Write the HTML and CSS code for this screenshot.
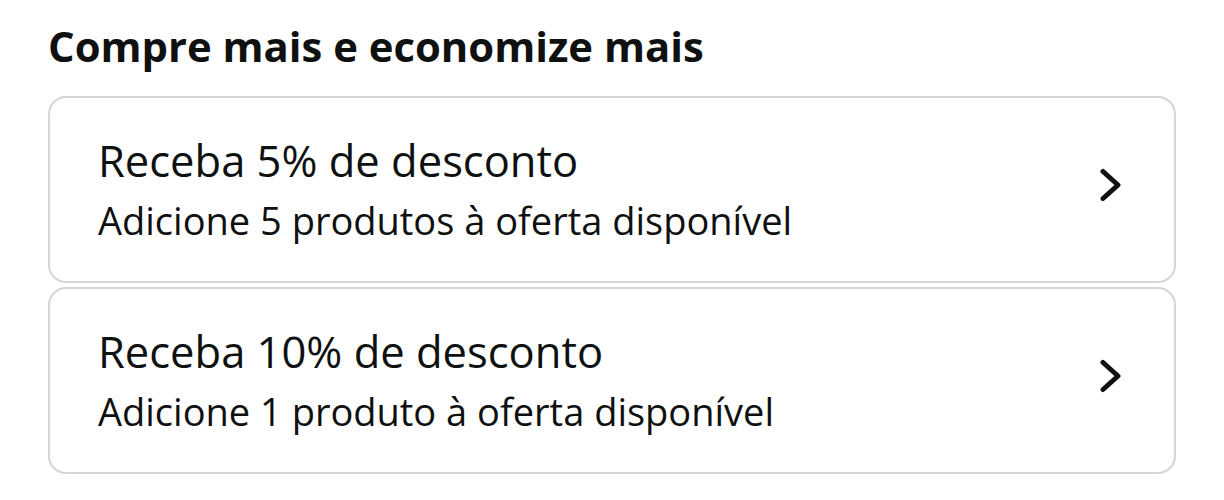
FILE: index.html
```html
<!DOCTYPE html>
<html lang="pt-BR">
  <head>
    <meta charset="UTF-8" />
    <meta name="viewport" content="width=device-width, initial-scale=1.0" />
    <title>Compre mais e economize mais</title>
    <link rel="stylesheet" href="styles.css">
  </head>

  <body>
    <div class="section">
      <h2 class="heading">Compre mais e economize mais</h2>
      <div class="offers">
        <div class="offer">
          <div class="offer-text">
            <p class="offer-title">Receba 5% de desconto</p>
            <p class="offer-sub">Adicione 5 produtos à oferta disponível</p>
          </div>
          <svg class="chevron" width="26" height="34" viewBox="0 0 26 34">
            <path d="M5 3.5 L20 17 L5 30.5" fill="none" stroke="#111" stroke-width="5" stroke-linecap="round" stroke-linejoin="round" />
          </svg>
        </div>
        <div class="offer">
          <div class="offer-text">
            <p class="offer-title">Receba 10% de desconto</p>
            <p class="offer-sub">Adicione 1 produto à oferta disponível</p>
          </div>
          <svg class="chevron" width="26" height="34" viewBox="0 0 26 34">
            <path d="M5 3.5 L20 17 L5 30.5" fill="none" stroke="#111" stroke-width="5" stroke-linecap="round" stroke-linejoin="round" />
          </svg>
        </div>
      </div>
    </div>
  </body>
</html>
```

FILE: styles.css
```css
body,
html {
  margin: 0;
  background: #fff;
  font-family: "Open Sans", "Noto Sans", Arial, sans-serif;
  color: #0f1111;
}

.section {
  padding: 20px 48px 0 48px;
}

.heading {
  margin: 0 0 24px 0;
  font-size: 41.8px;
  font-weight: 700;
  line-height: 52px;
}

.offers {
  display: flex;
  flex-direction: column;
  gap: 4px;
}

.offer {
  display: flex;
  align-items: center;
  justify-content: space-between;
  height: 183px;
  padding: 0 50px 0 48px;
  border: 2px solid #d5d5d5;
  border-radius: 18px;
}

.offer-text {
  margin-top: 4px;
}

.offer-title {
  margin: 0;
  font-size: 43.5px;
  line-height: 56px;
}

.offer-sub {
  margin: 0;
  font-size: 38px;
  line-height: 62px;
}

.chevron {
  margin-top: -10px;
}
```
